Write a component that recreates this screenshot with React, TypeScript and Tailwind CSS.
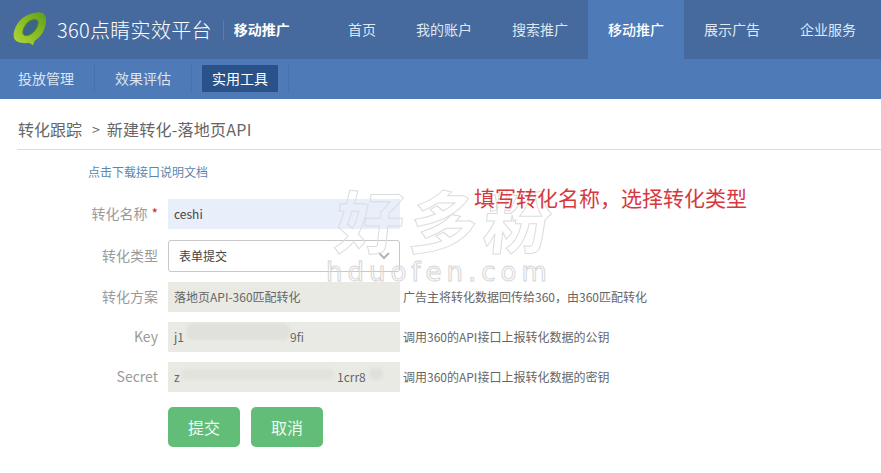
const cjk = "font-['Noto_Sans_CJK_SC','Liberation_Sans',sans-serif]";

const mainNav = [
  { label: '首页' },
  { label: '我的账户' },
  { label: '搜索推广' },
  { label: '移动推广', active: true },
  { label: '展示广告' },
  { label: '企业服务' },
];

const Logo = () => (
  <svg width="36" height="38" viewBox="0 0 36 38" className="shrink-0">
    <defs>
      <linearGradient id="ring" x1="0" y1="1" x2="1" y2="0">
        <stop offset="0" stopColor="#b2d93a" />
        <stop offset="0.55" stopColor="#86bb22" />
        <stop offset="1" stopColor="#5f9c1c" />
      </linearGradient>
    </defs>
    <path
      d="M25 1.500c5.500-1 8.500 3 8 9.500c-.6 8-5 15-11 18.500c-1 1-1 3.500-2.500 5c-1-1.500-2-2.500-4-2.500c-6 .5-12.500 0-14.500-5C-.5 21 3 13 9 7.500C14 3.500 19 2 25 1.500z"
      fill="url(#ring)"
    />
    <path
      d="M21.500 8.500c3.500 0 4.500 2.500 3 6.500c-2 5-6 9-10.500 9.500c-4 .5-5-2.500-3.500-6.500C12.500 13 16.500 8.500 21.500 8.500z"
      fill="#3c6488"
      stroke="#4f8a1e"
      strokeWidth="1"
    />
  </svg>
);

const Field = ({ label, required, children }: { label: string; required?: boolean; children: React.ReactNode }) => (
  <div className="flex items-center">
    <label className="w-[158px] shrink-0 pb-[2px] text-right text-[14px] text-[#9a9a9a]">
      {label}
      {required && <span className="ml-1 text-[#c9302c]">*</span>}
    </label>
    <div className="ml-[10px] flex items-center">{children}</div>
  </div>
);

const ReadonlyField = ({ label, hint, children }: { label: string; hint: string; children: React.ReactNode }) => (
  <Field label={label}>
    <div className="relative flex h-[30px] w-[232px] items-center overflow-hidden bg-[#eaeae4] px-[6px] text-[12px] text-[#666]">
      {children}
    </div>
    <span className="ml-[3px] text-[12px] text-[#666]">{hint}</span>
  </Field>
);

export default function App() {
  return (
    <div className={`relative h-[473px] w-[881px] overflow-hidden bg-white ${cjk}`}>
      {/* top bar */}
      <header className="flex h-[59px] items-center justify-between bg-[#466a9e] pr-[5px]">
        <div className="flex items-center pl-[13px]">
          <Logo />
          <span className="ml-[8px] text-[20px] leading-none font-light tracking-[0.3px] text-white">360点睛实效平台</span>
          <span className="ml-[11px] h-[20px] w-px bg-[#5c7dab]" />
          <span className="ml-[10px] text-[14px] font-bold text-white">移动推广</span>
        </div>
        <nav className="flex h-full">
          {mainNav.map((item) => (
            <a
              key={item.label}
              className={`flex h-full items-center px-[20px] text-[14px] ${
                item.active ? 'bg-[#4e7ab8] font-medium text-white' : 'text-[#dfe7f2]'
              }`}
            >
              {item.label}
            </a>
          ))}
        </nav>
      </header>

      {/* sub nav */}
      <div className="flex h-[40px] items-center bg-[#4e7ab8] pb-px pl-[18px] text-[14px] text-[#dbe5f3]">
        <a>投放管理</a>
        <span className="mx-[20px] h-[27px] w-px bg-[#4871ab]" />
        <a>效果评估</a>
        <span className="ml-[20px] h-[27px] w-px bg-[#4871ab]" />
        <a className="ml-[10px] flex h-[27px] items-center bg-[#2a5288] px-[10px] text-white">实用工具</a>
        <span className="ml-[10px] h-[27px] w-px bg-[#4871ab]" />
      </div>

      {/* breadcrumb */}
      <div className="ml-[17px] flex h-[51px] items-end border-b border-[#dedede] pb-[8px] pl-px text-[16px] leading-[24px] text-[#666]">
        <span>转化跟踪</span>
        <span className="ml-[10px] text-[14px]">&gt;</span>
        <span className="ml-[7px] tracking-[0.25px]">新建转化-落地页API</span>
      </div>

      <a className="mt-[13px] ml-[88px] block text-[12px] leading-[18px] text-[#5d86ac]">点击下载接口说明文档</a>

      {/* form */}
      <form className="mt-[18px] flex flex-col gap-[10px]">
        <div className="mb-px">
          <Field label="转化名称" required>
            <div className="flex h-[30px] w-[232px] items-center bg-[#e8eefa] px-[6px] text-[12px] text-[#444]">ceshi</div>
          </Field>
        </div>
        <Field label="转化类型">
          <div className="flex h-[32px] w-[232px] items-center justify-between rounded-[3px] border border-[#c8c8c8] bg-white pr-[9px] pl-[10px] text-[12px] text-[#444]">
            表单提交
            <svg width="12" height="8" viewBox="0 0 12 8" fill="none" stroke="#b4b4b4" strokeWidth="2">
              <path d="M1 1l5 5l5-5" />
            </svg>
          </div>
        </Field>
        <ReadonlyField label="转化方案" hint="广告主将转化数据回传给360，由360匹配转化">
          落地页API-360匹配转化
        </ReadonlyField>
        <ReadonlyField label="Key" hint="调用360的API接口上报转化数据的公钥">
          <span className="w-[116px]">j1</span>
          <span>9fi</span>
          <span className="absolute top-[1px] left-[18px] h-[17px] w-[104px] rounded-[8px] bg-[#e0e0dc] blur-[1px]" />
        </ReadonlyField>
        <ReadonlyField label="Secret" hint="调用360的API接口上报转化数据的密钥">
          <span className="w-[163px]">z</span>
          <span>1crr8</span>
          <span className="absolute top-[7px] left-[13px] h-[11px] w-[153px] rounded-[6px] bg-[#e3e3de] blur-[1px]" />
          <span className="absolute top-[6px] left-[201px] h-[12px] w-[14px] rounded-[6px] bg-[#e0e0dc] blur-[1px]" />
        </ReadonlyField>
        <div className="mt-[5px] ml-[168px] flex gap-[11px]">
          <button type="button" className="h-[40px] w-[72px] rounded-[5px] bg-[#62bd78] text-[16px] text-[#f0faf2]">
            提交
          </button>
          <button type="button" className="h-[40px] w-[72px] rounded-[5px] bg-[#62bd78] text-[16px] text-[#f0faf2]">
            取消
          </button>
        </div>
      </form>

      {/* watermark */}
      <div className="pointer-events-none absolute top-[179px] left-[332px] origin-bottom-left -skew-x-6 text-[68px] leading-[80px] font-bold tracking-[6px] text-transparent [-webkit-text-stroke:1px_#dcdcdc]">
        好多粉
      </div>
      <div className="pointer-events-none absolute top-[254px] left-[326px] font-['DejaVu_Sans',sans-serif] text-[26px] leading-[36px] tracking-[5px] text-transparent [-webkit-text-stroke:1px_#d6d6d6]">
        hduofen.com
      </div>

      {/* annotation */}
      <div className="absolute top-[183px] left-[474px] text-[21px] leading-[28px] text-[#d6393f]">
        填写转化名称，选择转化类型
      </div>
    </div>
  );
}
